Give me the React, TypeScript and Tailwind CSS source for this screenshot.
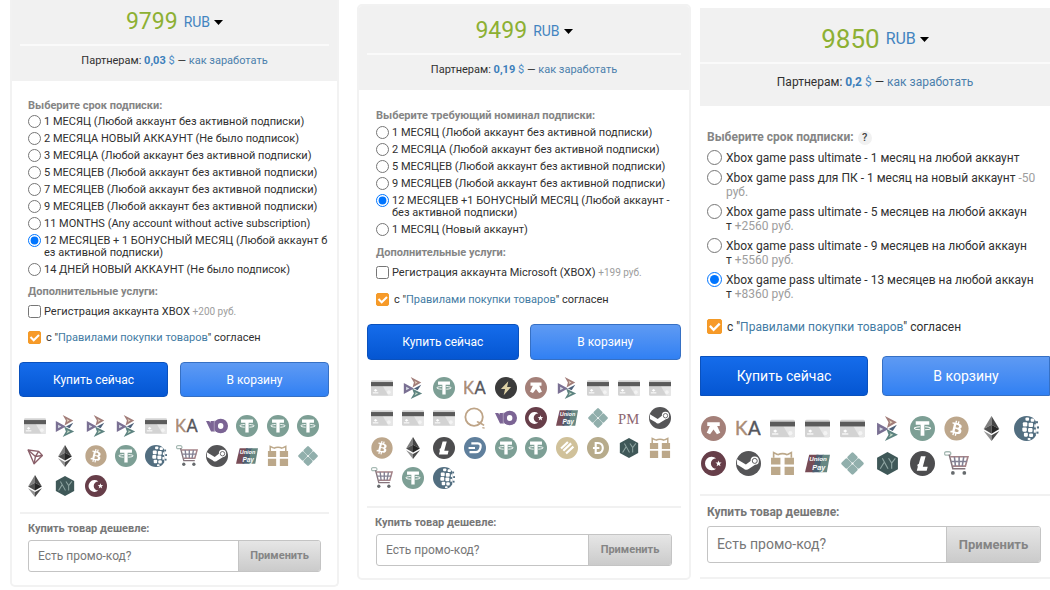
import React, { useState } from 'react';
import { FaBitcoin } from 'react-icons/fa';

const svgProps = { viewBox: '0 0 24 24', className: 'w-full h-full', 'aria-hidden': true };

const CardIcon = () => (
  <svg {...svgProps}>
    <rect x="0" y="3.5" width="24" height="17" rx="1.5" fill="#d3d3d3" />
    <path d="M13 10h11v9a1.5 1.5 0 0 1-1.5 1.5H19z" fill="#e6e6e6" />
    <rect x="0" y="5.5" width="24" height="4.5" fill="#5b5b5b" />
    <path d="M3 14.5l2-1.5 2 1.5-2 1.5z" fill="#fff" />
    <rect x="2" y="16.5" width="6" height="1.5" fill="#f4f4f4" />
    <circle cx="19.5" cy="16.5" r="2" fill="#f4f4f4" />
  </svg>
);

const ArrowsIcon = () => (
  <svg {...svgProps}>
    <path d="M9.5 0L21 6l-9.500 5.500 1.500-5.500z" fill="#a27d79" />
    <path d="M13.500 4l3.500 2-3 1.700.5-1.700z" fill="#e3d3bd" />
    <path d="M2 6.500l11 6L2 18.500z" fill="#7a7093" />
    <path d="M4.500 10.700l3.500 1.800-3.500 2z" fill="#d8dde6" />
    <path d="M13 12.500l8-4-4 6z" fill="#4d6079" />
    <path d="M11 12.500l11 5.500-12.500 6 3.500-6z" fill="#5d8380" />
    <path d="M14.500 16.500l3 1.500-4 2.300 1.300-2.300z" fill="#c4dac6" />
  </svg>
);

const KaIcon = () => (
  <svg {...svgProps}>
    <text x="-1" y="18" fontFamily="Lato, sans-serif" fontSize="18" fill="#a98b75" stroke="#a98b75" strokeWidth="0.4">K</text>
    <text x="11.5" y="18" fontFamily="Lato, sans-serif" fontSize="18" fill="#55565c" stroke="#55565c" strokeWidth="0.4">A</text>
  </svg>
);

const YooIcon = () => (
  <svg {...svgProps}>
    <path d="M0 6.500h3.500l1.500 2v-2h4.500v11.500H5.500z" fill="#7b6494" />
    <circle cx="16" cy="12" r="8" fill="#7b6494" />
    <path d="M9 6v12" stroke="#b9adc6" strokeWidth="0.8" />
    <ellipse cx="16" cy="12" rx="3" ry="3.3" fill="#fff" />
  </svg>
);

const TetherIcon = () => (
  <svg {...svgProps}>
    <circle cx="12" cy="12" r="12" fill="#7d9f95" />
    <path d="M5.5 5h13v3.500h-4.700V19h-3.600V8.500H5.500z" fill="#fff" />
    <path d="M9.500 10.300c-3.500.3-5.300.8-5.300 1.500s1.800 1.300 5.300 1.500M14.500 10.300c3.500.3 5.300.8 5.300 1.500s-1.800 1.300-5.300 1.500" fill="none" stroke="#fff" strokeWidth="1" />
  </svg>
);

const TronIcon = () => (
  <svg {...svgProps} fill="none" stroke="#8a5f69" strokeWidth="1.5" strokeLinejoin="round">
    <path d="M4.500 5.500L16 7l4 4.500L11 20.500z" />
    <path d="M4.500 5.500l8 7 7.500-1M16 7l-3.500 5.500-1.500 8" />
  </svg>
);

const EthIcon = () => (
  <svg {...svgProps}>
    <path d="M12 0L4.500 12.500l7.500-4z" fill="#7f7f7f" />
    <path d="M12 0l7.500 12.500-7.500-4z" fill="#464646" />
    <path d="M4.500 12.500L12 8.500v8.500z" fill="#4f4f4f" />
    <path d="M19.500 12.500L12 8.500v8.500z" fill="#252525" />
    <path d="M4.500 14.500l7.500 4V24z" fill="#929292" />
    <path d="M19.500 14.500l-7.500 4V24z" fill="#4a4a4a" />
  </svg>
);

const BtcIcon = () => <FaBitcoin className="w-full h-full text-[#bda78c]" aria-hidden />;

const SteamIcon = () => (
  <svg {...svgProps}>
    <circle cx="12" cy="12" r="12" fill="#555557" />
    <path d="M1 8l8.500 5L14 9.500a4 4 0 1 1 4.300 3.800L12.500 17c-1.500 1.500-4 1.300-5.300-.3L1 13z" fill="#fff" />
    <circle cx="18" cy="9.500" r="2.400" fill="#fff" stroke="#555557" strokeWidth="0.900" />
  </svg>
);

const WebMoneyIcon = () => (
  <svg {...svgProps}>
    <circle cx="12" cy="12" r="12" fill="#526e80" />
    <path d="M20 0h4v24h-4l-2-1 3-4V5l-3-4z" fill="#fff" />
    <g fill="#fff">
      <rect x="11" y="1.5" width="3.5" height="3" rx="1" />
      <rect x="16" y="2.5" width="3.5" height="3" rx="1" />
      <rect x="8.500" y="6" width="4.300" height="4" rx="1" />
      <rect x="14" y="6.500" width="4.300" height="4" rx="1" />
      <rect x="8" y="11" width="4.300" height="4" rx="1" />
      <rect x="13.500" y="11.500" width="4.300" height="4" rx="1" />
      <rect x="9.500" y="16" width="3.800" height="3.800" rx="1" />
      <rect x="14.500" y="16.700" width="3.800" height="3.500" rx="1" />
      <rect x="13" y="21" width="3" height="2" rx="1" />
      <rect x="19.5" y="8" width="1.5" height="3" />
      <rect x="19" y="13" width="2" height="3" />
    </g>
    <g fill="#526e80">
      <rect x="21" y="5" width="2" height="2" />
      <rect x="22" y="10" width="2" height="2" />
      <rect x="21.5" y="15" width="2" height="2" />
    </g>
  </svg>
);

const CartIcon = () => (
  <svg {...svgProps}>
    <rect x="0.5" y="0.7" width="6" height="3.3" rx="1.6" fill="none" stroke="#a7bab4" strokeWidth="1.3" />
    <path d="M5 3.500l3.500 13.500h12" fill="none" stroke="#85747c" strokeWidth="1.5" />
    <path d="M6 5.500h17l-2.500 9H8.500" fill="none" stroke="#a58388" strokeWidth="1.6" />
    <path d="M10 5.500l1 9M14.500 5.500v9M19 5.500l-1.500 9M7 10h15" stroke="#838194" strokeWidth="1.5" fill="none" />
    <circle cx="8.5" cy="21" r="1.8" fill="#666a6d" />
    <circle cx="19.5" cy="21" r="1.8" fill="#666a6d" />
  </svg>
);

const UnionPayIcon = () => (
  <svg {...svgProps}>
    <path d="M4 3.500h9L9 20.500H0z" fill="#784c56" />
    <path d="M11 3.500h7l-4 17H7z" fill="#4b6073" />
    <path d="M17 3.500h7l-3 17h-8z" fill="#668782" />
    <text x="4" y="10" fontFamily="Liberation Sans, sans-serif" fontStyle="italic" fontWeight="700" fontSize="6" fill="#fff">Union</text>
    <text x="7" y="18" fontFamily="Liberation Sans, sans-serif" fontStyle="italic" fontWeight="700" fontSize="7" fill="#fff">Pay</text>
  </svg>
);

const GiftIcon = () => (
  <svg {...svgProps}>
    <path d="M1 6.500h9V13H1zM14 6.500h9V13h-9zM1 15h9v8H1zM14 15h9v8h-9z" fill="#bca88a" />
    <path d="M7.500 3.500c3-1.300 6-1.300 9 0M7.500 3.500L3.500 1.500v5M16.500 3.500l4-2v5" fill="none" stroke="#bca88a" strokeWidth="1.6" />
  </svg>
);

const PixIcon = () => (
  <svg {...svgProps}>
    <path
      d="M12 2.500l3.700 3.700-3.700 3.700-3.700-3.700zM12 14.100l3.700 3.700-3.700 3.700-3.700-3.700zM6.200 8.300l3.700 3.700-3.700 3.700L2.500 12zM17.800 8.300l3.700 3.700-3.700 3.700-3.700-3.700z"
      fill="#91afac"
      stroke="#91afac"
      strokeWidth="2.6"
      strokeLinejoin="round"
    />
  </svg>
);

const HexIcon = () => (
  <svg {...svgProps}>
    <path d="M12 1l10 5.500v11L12 23 2 17.500v-11z" fill="#3f5858" />
    <path d="M5 17l4-6.500L7 7M9 10.500l3.500 6.500M13 7l3 4.500L19.500 7M16 11.500V17" fill="none" stroke="#8fa5a2" strokeWidth="1.1" />
  </svg>
);

const TurkeyIcon = () => (
  <svg {...svgProps}>
    <circle cx="12" cy="12" r="12" fill="#673e49" />
    <path d="M14.500 7a6.500 6.500 0 1 0 0 10 5 5 0 1 1 0-10z" fill="#fff" />
    <path d="M16.800 9l.8 2 2.200.1-1.700 1.400.6 2.100-1.900-1.200-1.800 1.200.6-2.100-1.700-1.400 2.200-.1z" fill="#fff" />
  </svg>
);

const BoltIcon = () => (
  <svg {...svgProps}>
    <circle cx="12" cy="12" r="12" fill="#3b3b3b" />
    <path d="M14.500 4.500L6.500 13H11l-1.500 7L17.500 11h-4.300z" fill="#dfd2a6" />
  </svg>
);

const ArchIcon = () => (
  <svg {...svgProps}>
    <circle cx="12" cy="12" r="12" fill="#a48079" />
    <path d="M6 6h12v3.500h-2.500l3 6.500-3.200 1.500L12 13l-3.300 4.500L5.500 16l3-6.500H6z" fill="#fff" />
  </svg>
);

const QiwiIcon = () => (
  <svg {...svgProps}>
    <circle cx="11" cy="11" r="9.5" fill="none" stroke="#bea487" strokeWidth="2" />
    <path d="M14 16c3 0 4 2 8 4" stroke="#bea487" strokeWidth="1.7" fill="none" />
    <path d="M20 22.500l2.500.5" stroke="#bea487" strokeWidth="1.5" />
  </svg>
);

const PmIcon = () => (
  <svg {...svgProps}>
    <text x="0" y="18" fontFamily="Liberation Serif, serif" fontSize="16" fill="#8d6670">PM</text>
  </svg>
);

const LtcIcon = () => (
  <svg {...svgProps}>
    <circle cx="12" cy="12" r="12" fill="#4d4d4f" />
    <path d="M10.500 5h4.500l-2.700 10H17l-1 4H6.500l1.200-4.500-.8.300.5-2 1-.4z" fill="#fff" />
  </svg>
);

const DashIcon = () => (
  <svg {...svgProps}>
    <circle cx="12" cy="12" r="12" fill="#5f7f9c" />
    <path d="M8 7h7c3 0 3.500 2 3 4.500-.7 3.500-2.500 5-5 5H6" fill="none" stroke="#fff" strokeWidth="2.4" />
    <path d="M5 12h7" stroke="#fff" strokeWidth="2.2" />
  </svg>
);

const BusdIcon = () => (
  <svg {...svgProps}>
    <circle cx="12" cy="12" r="12" fill="#d0c19a" />
    <path d="M5.500 12.500l7.500-7M8 15l8.500-8M11 18l8-7.500" stroke="#fff" strokeWidth="2.400" />
  </svg>
);

const DogeIcon = () => (
  <svg {...svgProps}>
    <circle cx="12" cy="12" r="12" fill="#b7ab8b" />
    <path d="M9.500 6.500H12c7 0 7 11 0 11H9.500zM6.500 12h7" fill="none" stroke="#fff" strokeWidth="2.3" />
  </svg>
);

const icons = {
  card: CardIcon,
  arrows: ArrowsIcon,
  ka: KaIcon,
  yoo: YooIcon,
  usdt: TetherIcon,
  tron: TronIcon,
  eth: EthIcon,
  btc: BtcIcon,
  wm: WebMoneyIcon,
  cart: CartIcon,
  steam: SteamIcon,
  union: UnionPayIcon,
  gift: GiftIcon,
  pix: PixIcon,
  hex: HexIcon,
  turkey: TurkeyIcon,
  bolt: BoltIcon,
  arch: ArchIcon,
  qiwi: QiwiIcon,
  pm: PmIcon,
  ltc: LtcIcon,
  dash: DashIcon,
  busd: BusdIcon,
  doge: DogeIcon,
};

type IconName = keyof typeof icons;

type Line = { text?: string; extra?: string };

type Offer = {
  id: string;
  price: string;
  partner: string;
  title: string;
  help?: boolean;
  options: Line[][];
  selected: number;
  service?: Line;
  methods: IconName[];
};

const offers: Offer[] = [
  {
    id: 'first',
    price: '9799',
    partner: '0,03',
    title: 'Выберите срок подписки:',
    options: [
      [{ text: '1 МЕСЯЦ (Любой аккаунт без активной подписки)' }],
      [{ text: '2 МЕСЯЦА НОВЫЙ АККАУНТ (Не было подписок)' }],
      [{ text: '3 МЕСЯЦА (Любой аккаунт без активной подписки)' }],
      [{ text: '5 МЕСЯЦЕВ (Любой аккаунт без активной подписки)' }],
      [{ text: '7 МЕСЯЦЕВ (Любой аккаунт без активной подписки)' }],
      [{ text: '9 МЕСЯЦЕВ (Любой аккаунт без активной подписки)' }],
      [{ text: '11 MONTHS (Any account without active subscription)' }],
      [{ text: '12 МЕСЯЦЕВ + 1 БОНУСНЫЙ МЕСЯЦ (Любой аккаунт б' }, { text: 'ез активной подписки)' }],
      [{ text: '14 ДНЕЙ НОВЫЙ АККАУНТ (Не было подписок)' }],
    ],
    selected: 7,
    service: { text: 'Регистрация аккаунта XBOX', extra: '+200 руб.' },
    methods: [
      'card', 'arrows', 'arrows', 'arrows', 'card', 'ka', 'yoo', 'usdt', 'usdt', 'usdt',
      'tron', 'eth', 'btc', 'usdt', 'wm', 'cart', 'steam', 'union', 'gift', 'pix',
      'eth', 'hex', 'turkey',
    ],
  },
  {
    id: 'second',
    price: '9499',
    partner: '0,19',
    title: 'Выберите требующий номинал подписки:',
    options: [
      [{ text: '1 МЕСЯЦ (Любой аккаунт без активной подписки)' }],
      [{ text: '2 МЕСЯЦА (Любой аккаунт без активной подписки)' }],
      [{ text: '5 МЕСЯЦЕВ (Любой аккаунт без активной подписки)' }],
      [{ text: '9 МЕСЯЦЕВ (Любой аккаунт без активной подписки)' }],
      [{ text: '12 МЕСЯЦЕВ +1 БОНУСНЫЙ МЕСЯЦ (Любой аккаунт -' }, { text: 'без активной подписки)' }],
      [{ text: '1 МЕСЯЦ (Новый аккаунт)' }],
    ],
    selected: 4,
    service: { text: 'Регистрация аккаунта Microsoft (XBOX)', extra: '+199 руб.' },
    methods: [
      'card', 'arrows', 'usdt', 'ka', 'bolt', 'arch', 'arrows', 'card', 'card', 'card',
      'card', 'card', 'card', 'qiwi', 'yoo', 'turkey', 'union', 'pix', 'pm', 'steam',
      'btc', 'eth', 'ltc', 'dash', 'usdt', 'usdt', 'busd', 'doge', 'hex', 'gift',
      'cart', 'usdt', 'wm',
    ],
  },
  {
    id: 'third',
    price: '9850',
    partner: '0,2',
    title: 'Выберите срок подписки:',
    help: true,
    options: [
      [{ text: 'Xbox game pass ultimate - 1 месяц на любой аккаунт' }],
      [{ text: 'Xbox game pass для ПК - 1 месяц на новый аккаунт', extra: '-50' }, { extra: 'руб.' }],
      [{ text: 'Xbox game pass ultimate - 5 месяцев на любой аккаун' }, { text: 'т', extra: '+2560 руб.' }],
      [{ text: 'Xbox game pass ultimate - 9 месяцев на любой аккаун' }, { text: 'т', extra: '+5560 руб.' }],
      [{ text: 'Xbox game pass ultimate - 13 месяцев на любой аккаун' }, { text: 'т', extra: '+8360 руб.' }],
    ],
    selected: 4,
    methods: [
      'arch', 'ka', 'card', 'card', 'card', 'arrows', 'usdt', 'btc', 'eth', 'wm',
      'turkey', 'steam', 'gift', 'union', 'pix', 'hex', 'ltc', 'cart',
    ],
  },
];

const base = {
  text: 'text-[11px] leading-3',
  extra: 'text-[10px]',
  price: 'text-[23px]',
  currency: 'text-[14px]',
  field: 'text-[12px]',
  applyText: 'text-[11px]',
  control: 'size-[13px]',
  option: 'gap-[3px]',
  icon: 'size-[22px]',
  promoPad: 'px-2',
  buyEdge: 'rounded-[4px]',
  basketEdge: 'rounded-[4px]',
};

const looks = [
  {
    ...base,
    card: 'ml-[10px] border-2 border-t-0 rounded-b-[5px] pb-[13px]',
    form: 'px-4',
    priceRow: 'h-[46px] mx-2',
    partnerRow: 'h-[35px] pb-[5px]',
    title: 'mt-[19px]',
    options: 'gap-[5px] mt-[4px]',
    service: 'mt-[10px]',
    agree: 'mt-[13px]',
    buttons: 'mt-[18px] ml-[7px] mr-2 gap-[12px] h-[35px]',
    methods: 'mt-[18px] mx-2 pr-[6px] gap-y-[8px]',
    promo: 'mt-[15px] mx-2 pt-[9px]',
    promoForm: 'h-[32px] mt-[5px] mx-4',
    apply: 'w-[82px]',
  },
  {
    ...base,
    card: 'ml-[18px] mt-[4px] border-2 rounded-[5px] pb-[12px]',
    form: 'px-[17px]',
    priceRow: 'h-[49px] mx-2 pt-1',
    partnerRow: 'h-[35px] pb-[5px]',
    title: 'mt-[20px]',
    options: 'gap-[5px] mt-[5px]',
    service: 'mt-[11px]',
    agree: 'mt-[14px]',
    buttons: 'mt-[18px] mx-2 gap-[11px] h-[36px]',
    methods: 'mt-[17px] mx-2 pr-[6px] gap-y-[8px]',
    promo: 'mt-[17px] mx-2 pt-[9px]',
    promoForm: 'h-[32px] mt-[5px] mx-[17px]',
    apply: 'w-[83px]',
  },
  {
    card: 'ml-[9px] mt-[8px] border-b-2 pb-[14px]',
    text: 'text-[12px] leading-[14px]',
    extra: 'text-[12px]',
    price: 'text-[26px]',
    currency: 'text-[16px]',
    field: 'text-[14px]',
    applyText: 'text-[13px]',
    control: 'size-[15px]',
    option: 'gap-[4px]',
    options: 'gap-[6px] mt-[6px]',
    form: 'px-[7px]',
    icon: 'size-[25px]',
    priceRow: 'h-[56px] pt-2',
    partnerRow: 'h-[42px] pb-[7px]',
    title: 'mt-[24px]',
    service: '',
    agree: 'mt-[18px]',
    buttons: 'mt-[22px] gap-[14px] h-[40px]',
    methods: 'mt-[20px] -ml-1 pr-[6px] gap-y-[10px]',
    promo: 'mt-[18px] pt-[9px]',
    promoPad: 'px-[7px]',
    promoForm: 'h-[37px] mt-[7px] ml-[7px] mr-[9px]',
    apply: 'w-[94px]',
    buyEdge: 'rounded-r-[4px]',
    basketEdge: 'rounded-l-[4px]',
  },
];

type Look = (typeof looks)[number];

const OfferCard = ({ offer, look }: { offer: Offer; look: Look }) => {
  const [selected, setSelected] = useState(offer.selected);
  const [service, setService] = useState(false);
  const [agreed, setAgreed] = useState(true);
  const [promo, setPromo] = useState('');

  return (
    <section className={`min-w-0 border-[#f2f2f2] bg-white overflow-hidden ${look.card}`}>
      <header className="bg-[#f1f1f1]">
        <div className={`flex items-center justify-center gap-[6px] border-b-2 border-[#fafafa] ${look.priceRow}`}>
          <span className={`text-[#8db033] ${look.price}`}>{offer.price}</span>
          <button type="button" className={`flex items-center gap-1 text-[#4384c0] ${look.currency}`}>
            RUB
            <svg viewBox="0 0 9 5" className="w-[9px] h-[5px]" aria-hidden>
              <path d="M0 0h9L4.500 5z" fill="#000" />
            </svg>
          </button>
        </div>
        <p className={`flex items-center justify-center ${look.text} ${look.partnerRow}`}>
          <span>
            Партнерам: <b className="text-[#3c7fbb]">{offer.partner}</b>{' '}
            <span className="text-[#4c8bc4]">$</span> —{' '}
            <a href="#earn" className="text-[#4b7fac]">как заработать</a>
          </span>
        </p>
      </header>

      <div className={`${look.text} ${look.form}`}>
        <fieldset className={look.title}>
          <legend className="font-bold text-[#858585]">
            {offer.title}
            {offer.help && (
              <button type="button" className="ml-1 size-[14px] rounded-full bg-[#f1f1f1] text-[11px] font-medium leading-[14px] text-[#444]">
                ?
              </button>
            )}
          </legend>
          <div className={`flex flex-col ${look.options}`}>
            {offer.options.map((lines, i) => (
              <label key={i} className={`flex items-start ${look.option}`}>
                <input
                  type="radio"
                  name={offer.id}
                  className={`m-0 -mt-px shrink-0 ${look.control}`}
                  checked={selected === i}
                  onChange={() => setSelected(i)}
                />
                <span className="whitespace-nowrap">
                  {lines.map((line, n) => (
                    <span key={n} className="block">
                      {line.text}
                      {line.text && line.extra && ' '}
                      {line.extra && <span className={`text-[#9d9d9d] ${look.extra}`}>{line.extra}</span>}
                    </span>
                  ))}
                </span>
              </label>
            ))}
          </div>
        </fieldset>

        {offer.service && (
          <fieldset className={look.service}>
            <legend className="font-bold text-[#858585]">Дополнительные услуги:</legend>
            <label className={`mt-[7px] flex items-center ${look.option}`}>
              <input
                type="checkbox"
                className={`m-0 shrink-0 ${look.control}`}
                checked={service}
                onChange={(e) => setService(e.target.checked)}
              />
              <span>
                {offer.service.text} <span className={`text-[#9d9d9d] ${look.extra}`}>{offer.service.extra}</span>
              </span>
            </label>
          </fieldset>
        )}

        <div className={`flex items-center gap-[5px] ${look.agree}`}>
          <span className={`grid shrink-0 ${look.control}`}>
            <input
              id={`agree-${offer.id}`}
              type="checkbox"
              className="col-start-1 row-start-1 size-full appearance-none rounded-[2px] border border-[#f39a27] checked:bg-[#f79a29]"
              checked={agreed}
              onChange={(e) => setAgreed(e.target.checked)}
            />
            {agreed && (
              <svg viewBox="0 0 13 13" className="pointer-events-none col-start-1 row-start-1 size-full" aria-hidden>
                <path d="M2.500 6l3.200 3.300L11 4" fill="none" stroke="#fff" strokeWidth="2" />
              </svg>
            )}
          </span>
          <label htmlFor={`agree-${offer.id}`}>
            с "<a href="#rules" className="text-[#437ba3]">Правилами покупки товаров</a>" согласен
          </label>
        </div>
      </div>

      <div className={`grid grid-cols-2 text-white ${look.field} ${look.buttons}`}>
        <button type="button" className={`border border-[#0a51bd] bg-linear-to-b from-[#156ceb] to-[#0556d2] ${look.buyEdge}`}>
          Купить сейчас
        </button>
        <button type="button" className={`border border-[#3670c4] bg-linear-to-b from-[#5e9af3] to-[#3080f3] ${look.basketEdge}`}>
          В корзину
        </button>
      </div>

      <ul className={`grid grid-cols-10 justify-items-center ${look.methods}`}>
        {offer.methods.map((name, i) => {
          const Icon = icons[name];
          return (
            <li key={i} className={look.icon}>
              <Icon />
            </li>
          );
        })}
      </ul>

      <div className={`border-t-2 border-[#f1f1f1] ${look.promo} ${look.promoPad} ${look.text}`}>
        <label htmlFor={`promo-${offer.id}`} className="block font-bold text-[#777]">
          Купить товар дешевле:
        </label>
      </div>
      <form
        className={`flex overflow-hidden rounded-[3px] border border-[#c4c4c4] ${look.promoForm}`}
        onSubmit={(e) => e.preventDefault()}
      >
        <input
          id={`promo-${offer.id}`}
          type="text"
          className={`min-w-0 flex-1 px-[9px] placeholder:text-[#777] ${look.field}`}
          placeholder="Есть промо-код?"
          value={promo}
          onChange={(e) => setPromo(e.target.value)}
        />
        <button
          type="submit"
          className={`shrink-0 border-l border-[#c4c4c4] bg-linear-to-b from-[#e6e6e6] to-[#cbcbcb] font-bold text-[#858585] ${look.applyText} ${look.apply}`}
        >
          Применить
        </button>
      </form>
    </section>
  );
};

const App = () => (
  <main className="grid grid-cols-[minmax(0,339fr)_minmax(0,352fr)_minmax(0,359fr)] items-start overflow-hidden bg-white font-[Roboto,'Liberation_Sans',sans-serif] text-[#303030]">
    {offers.map((offer, i) => (
      <OfferCard key={offer.id} offer={offer} look={looks[i]} />
    ))}
  </main>
);

export default App;
